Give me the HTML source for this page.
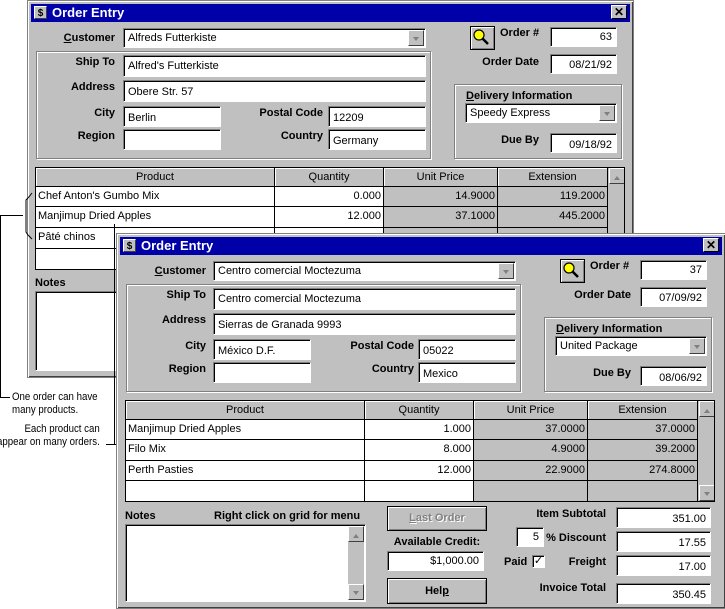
<!DOCTYPE html>
<html><head><meta charset="utf-8"><style>
*{box-sizing:border-box;margin:0;padding:0}
body{width:725px;height:609px;background:#fff;position:relative;overflow:hidden;font-family:"Liberation Sans",sans-serif;font-size:11px;color:#000}
.a{position:absolute}
.win{position:absolute;background:#c0c0c0;border:1px solid #808080;box-shadow:inset 1px 1px #fff,inset -1px -1px #404040;overflow:hidden}
.tb{position:absolute;left:3px;top:3px;right:3px;height:18px;background:#0000a8;color:#fff;font-weight:bold;font-size:13px;line-height:18px}
.ico{position:absolute;left:3px;top:2px;width:13px;height:13px;background:#c0c0c0;color:#000;font-size:10px;line-height:13px;text-align:center;border:1px solid #fff;border-right-color:#404040;border-bottom-color:#404040}
.cls{position:absolute;right:3px;top:1px;width:16px;height:14px;background:#c0c0c0;color:#000;font-size:12px;line-height:12px;text-align:center;border:1px solid #fff;border-right-color:#000;border-bottom-color:#000}
.l{position:absolute;font-weight:bold;white-space:nowrap;text-align:right}
.f{position:absolute;background:#fff;border:1px solid;border-color:#808080 #fff #fff #808080;box-shadow:inset 1px 1px #000;padding:3px 0 0 4px;white-space:nowrap;overflow:hidden}
.r{text-align:right;padding-right:4px}
.dd{position:absolute;right:1px;top:1px;bottom:1px;width:16px;background:#c0c0c0;border:1px solid #fff;border-right-color:#404040;border-bottom-color:#404040}
.dd:after{content:"";position:absolute;left:4px;top:6px;border:3px solid transparent;border-top:4px solid #808080}
.grp{position:absolute;border:1px solid #808080;box-shadow:1px 1px #fff,inset 1px 1px #fff}
.btn{position:absolute;background:#c0c0c0;border:1px solid #000;box-shadow:inset 1px 1px #fff,inset -1px -1px #808080;font-weight:bold;text-align:center}
.grid{position:absolute;border:1px solid #000;background:#c0c0c0;overflow:hidden}
.c{position:absolute;border-right:1px solid #000;border-bottom:1px solid #000;white-space:nowrap;overflow:hidden;padding:3px 2px 0 2px}
.h{text-align:center;background:#c0c0c0;box-shadow:inset 1px 1px #fff}
.w{background:#fff}
.g{background:#c0c0c0;text-align:right}
.q{background:#fff;text-align:right}
.sb{position:absolute;background:#c0c0c0}
.ar{position:absolute;width:16px;height:16px;background:#c0c0c0;border:1px solid #fff;border-right-color:#404040;border-bottom-color:#404040}
.up:after{content:"";position:absolute;left:4px;top:4px;border:3px solid transparent;border-bottom:4px solid #808080}
.dn:after{content:"";position:absolute;left:4px;top:6px;border:3px solid transparent;border-top:4px solid #808080}
.ln{position:absolute;background:#000}
.mag{position:absolute;background:#c0c0c0;border:1px solid #000;box-shadow:inset 1px 1px #fff,inset -1px -1px #808080}
</style></head><body>

<!-- BACK WINDOW -->
<div class="win" style="left:27px;top:0;width:607px;height:378px">
 <div class="tb"><div class="ico">$</div><span style="position:absolute;left:21px">Order Entry</span><div class="cls">✕</div></div>
 <div class="l" style="right:518px;top:31px"><u>C</u>ustomer</div>
 <div class="f" style="left:95px;top:27px;width:303px;height:20px">Alfreds Futterkiste<div class="dd"></div></div>
 <div class="grp" style="left:8px;top:50px;width:395px;height:108px"></div>
 <div class="l" style="right:518px;top:55px">Ship To</div>
 <div class="f" style="left:95px;top:54px;width:303px;height:22px;padding-top:4px">Alfred's Futterkiste</div>
 <div class="l" style="right:518px;top:80px">Address</div>
 <div class="f" style="left:95px;top:79px;width:303px;height:22px;padding-top:5px">Obere Str. 57</div>
 <div class="l" style="right:518px;top:106px">City</div>
 <div class="f" style="left:95px;top:105px;width:98px;height:21px;padding-top:5px">Berlin</div>
 <div class="l" style="right:310px;top:106px">Postal Code</div>
 <div class="f" style="left:300px;top:105px;width:98px;height:21px;padding-top:5px">12209</div>
 <div class="l" style="right:518px;top:129px">Region</div>
 <div class="f" style="left:95px;top:128px;width:98px;height:21px"></div>
 <div class="l" style="right:310px;top:129px">Country</div>
 <div class="f" style="left:300px;top:128px;width:98px;height:21px;padding-top:5px">Germany</div>
 <div class="mag" style="left:442px;top:25px;width:25px;height:24px"><svg width="23" height="22" viewBox="0 0 23 22"><line x1="10" y1="10" x2="17" y2="17" stroke="#000" stroke-width="2.5"/><circle cx="8" cy="8" r="5" fill="#ff0" stroke="#000" stroke-width="1.2"/></svg></div>
 <div class="l" style="left:472px;top:26px;text-align:left">Order #</div>
 <div class="f r" style="left:522px;top:26px;width:67px;height:20px">63</div>
 <div class="l" style="right:94px;top:55px">Order Date</div>
 <div class="f r" style="left:522px;top:53px;width:67px;height:20px;padding-top:4px">08/21/92</div>
 <div class="grp" style="left:426px;top:83px;width:168px;height:75px"></div>
 <div class="l" style="left:438px;top:89px;text-align:left"><u>D</u>elivery Information</div>
 <div class="f" style="left:437px;top:102px;width:152px;height:20px">Speedy Express<div class="dd"></div></div>
 <div class="l" style="right:94px;top:133px">Due By</div>
 <div class="f r" style="left:522px;top:132px;width:67px;height:20px;padding-top:5px">09/18/92</div>
 <div class="grid" style="left:7px;top:166px;width:590px;height:103px">
  <div class="c h" style="left:0;top:0;width:239px;height:19px">Product</div>
  <div class="c h" style="left:239px;top:0;width:109px;height:19px">Quantity</div>
  <div class="c h" style="left:348px;top:0;width:114px;height:19px">Unit Price</div>
  <div class="c h" style="left:462px;top:0;width:110px;height:19px">Extension</div>
  <div class="c w" style="left:0;top:19px;width:239px;height:20px">Chef Anton's Gumbo Mix</div>
  <div class="c q" style="left:239px;top:19px;width:109px;height:20px">0.000</div>
  <div class="c g" style="left:348px;top:19px;width:114px;height:20px">14.9000</div>
  <div class="c g" style="left:462px;top:19px;width:110px;height:20px">119.2000</div>
  <div class="c w" style="left:0;top:39px;width:239px;height:21px">Manjimup Dried Apples</div>
  <div class="c q" style="left:239px;top:39px;width:109px;height:21px">12.000</div>
  <div class="c g" style="left:348px;top:39px;width:114px;height:21px">37.1000</div>
  <div class="c g" style="left:462px;top:39px;width:110px;height:21px">445.2000</div>
  <div class="c w" style="left:0;top:60px;width:239px;height:21px">Pâté chinos</div>
  <div class="c q" style="left:239px;top:60px;width:109px;height:21px"></div>
  <div class="c g" style="left:348px;top:60px;width:114px;height:21px"></div>
  <div class="c g" style="left:462px;top:60px;width:110px;height:21px"></div>
  <div class="c w" style="left:0;top:81px;width:239px;height:21px"></div>
  <div class="ar up" style="left:573px;top:0"></div>
 </div>
 <div class="l" style="left:7px;top:276px;text-align:left">Notes</div>
 <div class="f" style="left:7px;top:290px;width:240px;height:80px"></div>
</div>

<!-- annotations -->
<div class="ln" style="left:0;top:215px;width:23px;height:1px"></div>
<div class="ln" style="left:0;top:215px;width:1px;height:183px"></div>
<div class="ln" style="left:0;top:397px;width:10px;height:1px"></div>
<svg class="a" style="left:20px;top:190px" width="14" height="52"><path d="M12 3 L8 8 L6 10 L6 42 L8 45 L12 49" fill="none" stroke="#000"/></svg>
<div class="a" style="left:12px;top:391px;font-size:11px;line-height:13px;white-space:nowrap;transform:scaleX(.88);transform-origin:left">One order can have<br>many products.</div>
<div class="a" style="right:625px;top:423px;text-align:right;font-size:11px;line-height:13px;white-space:nowrap;transform:scaleX(.88);transform-origin:right">Each product can<br>appear on many orders.</div>
<div class="ln" style="left:114px;top:224px;width:1px;height:221px"></div>
<div class="ln" style="left:106px;top:444px;width:80px;height:1px"></div>
<div class="ln" style="left:185px;top:436px;width:1px;height:9px"></div>

<!-- FRONT WINDOW -->
<div class="win" style="left:116px;top:233px;width:610px;height:376px">
 <div class="tb"><div class="ico">$</div><span style="position:absolute;left:21px">Order Entry</span><div class="cls">✕</div></div>
 <div class="l" style="right:519px;top:31px"><u>C</u>ustomer</div>
 <div class="f" style="left:96px;top:27px;width:303px;height:20px">Centro comercial Moctezuma<div class="dd"></div></div>
 <div class="grp" style="left:9px;top:50px;width:395px;height:108px"></div>
 <div class="l" style="right:519px;top:55px">Ship To</div>
 <div class="f" style="left:96px;top:54px;width:303px;height:22px;padding-top:4px">Centro comercial Moctezuma</div>
 <div class="l" style="right:519px;top:80px">Address</div>
 <div class="f" style="left:96px;top:79px;width:303px;height:22px;padding-top:5px">Sierras de Granada 9993</div>
 <div class="l" style="right:519px;top:106px">City</div>
 <div class="f" style="left:96px;top:105px;width:98px;height:21px;padding-top:5px">México D.F.</div>
 <div class="l" style="right:311px;top:106px">Postal Code</div>
 <div class="f" style="left:301px;top:105px;width:98px;height:21px;padding-top:5px">05022</div>
 <div class="l" style="right:519px;top:129px">Region</div>
 <div class="f" style="left:96px;top:128px;width:98px;height:21px"></div>
 <div class="l" style="right:311px;top:129px">Country</div>
 <div class="f" style="left:301px;top:128px;width:98px;height:21px;padding-top:5px">Mexico</div>
 <div class="mag" style="left:443px;top:25px;width:25px;height:24px"><svg width="23" height="22" viewBox="0 0 23 22"><line x1="10" y1="10" x2="17" y2="17" stroke="#000" stroke-width="2.5"/><circle cx="8" cy="8" r="5" fill="#ff0" stroke="#000" stroke-width="1.2"/></svg></div>
 <div class="l" style="left:473px;top:26px;text-align:left">Order #</div>
 <div class="f r" style="left:523px;top:26px;width:67px;height:20px">37</div>
 <div class="l" style="right:94px;top:55px">Order Date</div>
 <div class="f r" style="left:523px;top:53px;width:67px;height:20px;padding-top:4px">07/09/92</div>
 <div class="grp" style="left:427px;top:83px;width:168px;height:75px"></div>
 <div class="l" style="left:439px;top:89px;text-align:left"><u>D</u>elivery Information</div>
 <div class="f" style="left:438px;top:102px;width:152px;height:20px">United Package<div class="dd"></div></div>
 <div class="l" style="right:94px;top:133px">Due By</div>
 <div class="f r" style="left:523px;top:132px;width:67px;height:20px;padding-top:5px">08/06/92</div>
 <div class="grid" style="left:8px;top:166px;width:590px;height:102px">
  <div class="c h" style="left:0;top:0;width:239px;height:19px">Product</div>
  <div class="c h" style="left:239px;top:0;width:109px;height:19px">Quantity</div>
  <div class="c h" style="left:348px;top:0;width:114px;height:19px">Unit Price</div>
  <div class="c h" style="left:462px;top:0;width:110px;height:19px">Extension</div>
  <div class="c w" style="left:0;top:19px;width:239px;height:20px">Manjimup Dried Apples</div>
  <div class="c q" style="left:239px;top:19px;width:109px;height:20px">1.000</div>
  <div class="c g" style="left:348px;top:19px;width:114px;height:20px">37.0000</div>
  <div class="c g" style="left:462px;top:19px;width:110px;height:20px">37.0000</div>
  <div class="c w" style="left:0;top:39px;width:239px;height:21px">Filo Mix</div>
  <div class="c q" style="left:239px;top:39px;width:109px;height:21px">8.000</div>
  <div class="c g" style="left:348px;top:39px;width:114px;height:21px">4.9000</div>
  <div class="c g" style="left:462px;top:39px;width:110px;height:21px">39.2000</div>
  <div class="c w" style="left:0;top:60px;width:239px;height:20px">Perth Pasties</div>
  <div class="c q" style="left:239px;top:60px;width:109px;height:20px">12.000</div>
  <div class="c g" style="left:348px;top:60px;width:114px;height:20px">22.9000</div>
  <div class="c g" style="left:462px;top:60px;width:110px;height:20px">274.8000</div>
  <div class="c w" style="left:0;top:80px;width:239px;height:21px"></div>
  <div class="c q" style="left:239px;top:80px;width:109px;height:21px"></div>
  <div class="c g" style="left:348px;top:80px;width:114px;height:21px"></div>
  <div class="c g" style="left:462px;top:80px;width:110px;height:21px"></div>
  <div class="ar up" style="left:573px;top:0"></div>
  <div class="ar dn" style="left:573px;top:84px"></div>
 </div>
 <div class="l" style="left:8px;top:276px;text-align:left">Notes</div>
 <div class="l" style="left:97px;top:276px;text-align:left">Right click on grid for menu</div>
 <div class="f" style="left:8px;top:290px;width:241px;height:78px">
  <div class="sb" style="right:1px;top:1px;width:16px;bottom:1px"></div>
  <div class="ar up" style="right:1px;top:1px"></div>
  <div class="ar dn" style="right:1px;bottom:1px"></div>
 </div>
 <div class="btn" style="left:270px;top:272px;width:100px;height:25px;line-height:23px;color:#808080;text-shadow:1px 1px #fff"><u>L</u>ast Order</div>
 <div class="l" style="left:270px;top:302px;width:100px;text-align:center">Available Credit:</div>
 <div class="f r" style="left:270px;top:317px;width:97px;height:20px">$1,000.00</div>
 <div class="btn" style="left:270px;top:344px;width:100px;height:26px;line-height:24px">Hel<u>p</u></div>
 <div class="l" style="right:119px;top:274px">Item Subtotal</div>
 <div class="f r" style="left:499px;top:273px;width:95px;height:21px;padding-top:5px">351.00</div>
 <div class="f r" style="left:399px;top:293px;width:28px;height:20px">5</div>
 <div class="l" style="right:119px;top:298px">% Discount</div>
 <div class="f r" style="left:499px;top:297px;width:95px;height:21px;padding-top:5px">17.55</div>
 <div class="l" style="left:387px;top:322px;text-align:left">Paid</div>
 <div class="f" style="left:415px;top:321px;width:13px;height:13px;padding:0;font-size:11px;line-height:11px;text-align:center">✓</div>
 <div class="l" style="right:119px;top:322px">Freight</div>
 <div class="f r" style="left:499px;top:321px;width:95px;height:21px;padding-top:5px">17.00</div>
 <div class="l" style="right:119px;top:348px">Invoice Total</div>
 <div class="f r" style="left:499px;top:349px;width:95px;height:21px;padding-top:5px">350.45</div>
</div>
</body></html>
